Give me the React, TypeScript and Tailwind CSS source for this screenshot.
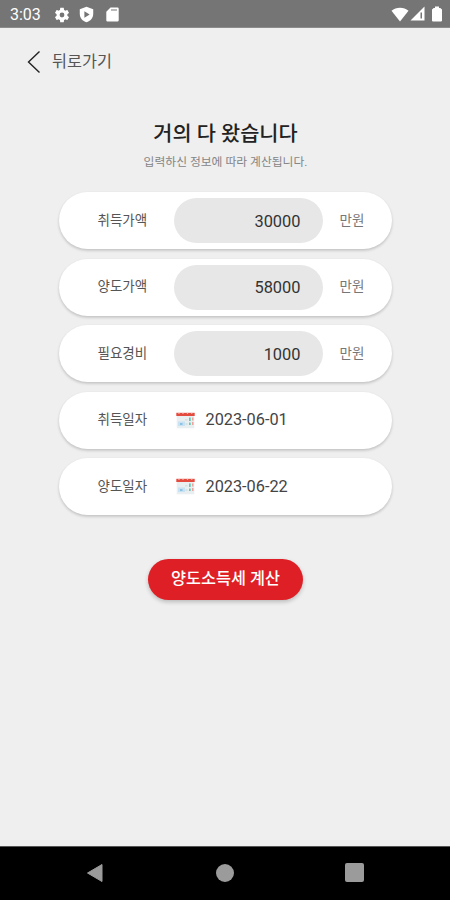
import type { ReactNode } from 'react'

const amounts = [
  { label: '취득가액', value: '30000' },
  { label: '양도가액', value: '58000' },
  { label: '필요경비', value: '1000' },
]

const dates = [
  { label: '취득일자', value: '2023-06-01' },
  { label: '양도일자', value: '2023-06-22' },
]

function StatusBar() {
  return (
    <div className="flex h-[28px] shrink-0 items-center border-b border-[#8c8c8c] bg-[#757575] pr-[7px] pl-[10px] text-white">
      <span className="w-[43px] pt-[3px] text-[16px] leading-none">3:03</span>
      <svg className="mt-[3px] h-[18px] w-[18px]" viewBox="0 0 24 24" fill="currentColor">
        <path d="M19.14 12.94c.04-.3.06-.61.06-.94 0-.32-.02-.64-.07-.94l2.03-1.58c.18-.14.23-.41.12-.61l-1.92-3.32c-.12-.22-.37-.29-.59-.22l-2.39.96c-.5-.38-1.03-.7-1.62-.94l-.36-2.54c-.04-.24-.24-.41-.48-.41h-3.84c-.24 0-.43.17-.47.41l-.36 2.54c-.59.24-1.13.57-1.62.94l-2.39-.96c-.22-.08-.47 0-.59.22L2.74 8.87c-.12.21-.08.47.12.61l2.03 1.58c-.05.3-.09.63-.09.94s.02.64.07.94l-2.03 1.58c-.18.14-.23.41-.12.61l1.92 3.32c.12.22.37.29.59.22l2.39-.96c.5.38 1.03.7 1.62.94l.36 2.54c.05.24.24.41.48.41h3.84c.24 0 .44-.17.47-.41l.36-2.54c.59-.24 1.13-.56 1.62-.94l2.39.96c.22.08.47 0 .59-.22l1.92-3.32c.12-.22.07-.47-.12-.61l-2.01-1.58zM12 15.2A3.2 3.2 0 1 1 12 8.8a3.2 3.2 0 0 1 0 6.4z" />
      </svg>
      <svg className="mt-[2px] ml-[7px] h-[17px] w-[17px]" viewBox="0 0 24 24" fill="currentColor">
        <path fillRule="evenodd" d="M12 1 2.5 4.5V11c0 5.8 4 10.5 9.500 12 5.500-1.500 9.500-6.200 9.500-12V4.500L12 1zM9 7.500v9l7.500-4.500L9 7.500z" />
      </svg>
      <svg className="mt-[2px] ml-[11px] h-[15px] w-[13px]" viewBox="0 0 13 15" fill="currentColor">
        <path fillRule="evenodd" d="M4.500.5h7a1.200 1.200 0 0 1 1.200 1.200v11.600a1.200 1.200 0 0 1-1.200 1.200h-10a1.200 1.200 0 0 1-1.200-1.200V4.700zM5 2.500v1h6v-1z" />
      </svg>
      <svg className="mt-[1px] ml-auto h-[15px] w-[18px]" viewBox="0 0 18 15" fill="currentColor">
        <path d="M9 14.500.5 3.800C2.800 1.800 5.800.7 9 .7s6.200 1.100 8.500 3.100z" />
      </svg>
      <svg className="ml-px h-[15px] w-[15px]" viewBox="0 0 15 15">
        <path d="M.5 14.500h14V.5z" fill="white" />
        <path d="M10.500 6.500h1.500v6h-1.500z" fill="#757575" />
      </svg>
      <svg className="mr-px ml-[7px] h-[16px] w-[10px]" viewBox="0 0 10 16" fill="currentColor">
        <path d="M3 .5h4v1.500h1.300L10 3.500V14.500a1 1 0 0 1-1 1H1a1 1 0 0 1-1-1V3.500L1.700 2H3z" />
      </svg>
    </div>
  )
}

function CalendarIcon() {
  return (
    <svg className="h-[17px] w-[19px]" viewBox="0 0 19 17">
      <path d="M.7 3h17.600v13.300H.7z" fill="#e9eef0" />
      <path d="M.3.800h18.400v3.200H.3z" fill="#e34b3f" />
      <path d="M3 0v1.800M7 0v1.800M11.500 0v1.800M15.700 0v1.800" stroke="#f8d8d4" strokeWidth="1.200" />
      <path d="M2 9.500h7v4.500H2z" fill="#c9e2f1" />
      <path d="M4 11h2.500v2H4z" fill="#8bc3e8" />
      <path d="M9 7h2.500v1.500H9zM9.500 11h2v2h-2z" fill="#d3e2e7" />
      <path d="M13 5.500h1.700V9H13zM13 10.500h1.700v2.500H13z" fill="#5fc9b6" />
      <path d="M16 5.500h1.500v3H16zM16 10h1.500v3H16z" fill="#eba39c" />
    </svg>
  )
}

function FormRow({ label, children }: { label: string; children: ReactNode }) {
  return (
    <div className="flex h-[57px] items-center rounded-full bg-white pl-[38px] shadow-[0_1.5px_3px_rgba(0,0,0,0.2)]">
      <span className="w-[77px] pb-px pl-px text-[13.5px] text-[#555]">{label}</span>
      {children}
    </div>
  )
}

function NavigationBar() {
  return (
    <div className="flex h-[54px] shrink-0 items-center justify-between border-t border-[#555] bg-black pr-[86px] pb-[2px] pl-[86px]">
      <svg className="h-[20px] w-[18px]" viewBox="0 0 18 20">
        <path d="M16 1.500v17L1.500 10z" fill="#9b9b9b" stroke="#9b9b9b" strokeLinejoin="round" />
      </svg>
      <div className="h-[18px] w-[18px] rounded-full bg-[#9b9b9b]" />
      <div className="h-[19px] w-[19px] rounded-[2px] bg-[#9b9b9b]" />
    </div>
  )
}

export default function App() {
  return (
    <div className="flex h-[900px] w-[450px] flex-col bg-[#efefef] font-[Roboto,'Noto_Sans_CJK_KR',sans-serif]">
      <StatusBar />
      <header className="flex h-[67px] items-center pl-[27px]">
        <svg className="h-[24px] w-[14px]" viewBox="0 0 14 24" fill="none" stroke="#222" strokeWidth="1.400">
          <path d="M12.500 1.500 1.500 12l11 10.500" />
        </svg>
        <span className="ml-[11px] pt-[2px] text-[16.3px] text-[#555]">뒤로가기</span>
      </header>
      <main className="flex flex-1 flex-col items-center">
        <h1 className="mt-[24px] pl-px text-[20.8px] leading-[30px] font-medium text-[#222]">거의 다 왔습니다</h1>
        <p className="mt-[3px] pl-px text-[11.8px] leading-[20px] text-[#858585]">입력하신 정보에 따라 계산됩니다.</p>
        <div className="mt-[20px] flex w-[333px] flex-col gap-[9.5px]">
          {amounts.map((row) => (
            <FormRow key={row.label} label={row.label}>
              <div className="flex h-[45px] w-[149px] items-center justify-end rounded-full bg-[#e7e7e7] pt-[3px] pr-[22px] text-[16.4px] text-[#333]">
                {row.value}
              </div>
              <span className="ml-[17px] pb-px text-[13.5px] text-[#777]">만원</span>
            </FormRow>
          ))}
          {dates.map((row) => (
            <FormRow key={row.label} label={row.label}>
              <div className="ml-[2px] flex items-center gap-[11px] text-[16.3px] text-[#444]">
                <CalendarIcon />
                <span className="pt-px">{row.value}</span>
              </div>
            </FormRow>
          ))}
        </div>
        <button className="mt-[44px] h-[41px] w-[155px] rounded-full bg-[#df1f26] pb-px pl-px text-[16.3px] font-medium text-white shadow-[0_2px_4px_rgba(0,0,0,0.22)]">
          양도소득세 계산
        </button>
      </main>
      <NavigationBar />
    </div>
  )
}
